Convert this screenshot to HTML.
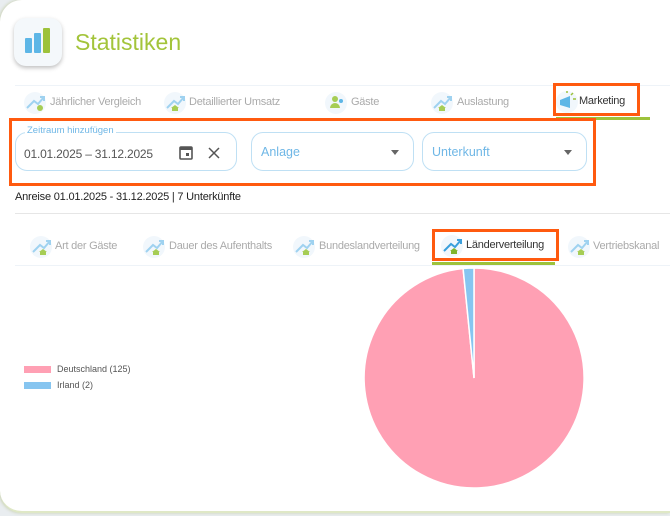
<!DOCTYPE html>
<html><head><meta charset="utf-8"><style>
body{margin:0;width:670px;height:516px;overflow:hidden;background:#e9edf0;font-family:"Liberation Sans",sans-serif;position:relative}
.card{position:absolute;left:0;top:0;width:670px;height:511px;background:#fff;border-radius:22px 0 0 22px;box-shadow:-1px 0 3px #c8d0b0;border-bottom:2px solid #dfe8c6}
.a{position:absolute}
.tab{position:absolute;font-size:11px;letter-spacing:-0.25px;color:#aaa;white-space:nowrap}
.ic{position:absolute;width:22px;height:22px;border-radius:50%;background:#f1f7fc}
.field{position:absolute;border:1px solid #bfe0f4;border-radius:12px;height:39px;top:132px;box-sizing:border-box}
.ph{position:absolute;left:9px;top:12px;font-size:12.5px;color:#6fb7e6}
.arr{position:absolute;right:14px;top:17px;width:0;height:0;border-left:4px solid transparent;border-right:4px solid transparent;border-top:5px solid #666}
.ob{position:absolute;border:3px solid #ff5a0f;box-sizing:border-box}
</style></head><body>
<div class="card">
<div class="a" style="left:14px;top:18px;width:48px;height:48px;border-radius:12px;background:#f4f8fb;box-shadow:0 2px 4px rgba(0,0,0,.25)">
 <div class="a" style="left:11px;top:20px;width:7px;height:15px;background:#5db6e6;border-radius:1px"></div>
 <div class="a" style="left:20px;top:15px;width:7px;height:20px;background:#5db6e6;border-radius:1px"></div>
 <div class="a" style="left:29px;top:10px;width:7px;height:25px;background:#9dc23b;border-radius:1px"></div>
</div>
<div class="a" style="left:75px;top:29px;font-size:23px;color:#a3c43a">Statistiken</div>
<div class="a" style="left:15px;top:85px;width:655px;height:1px;background:#eef3f8"></div>

<div class="ic" style="left:24px;top:92px"></div><div class="tab" style="left:50px;top:96px">Jährlicher Vergleich</div>
<div class="ic" style="left:164px;top:92px"></div><div class="tab" style="left:189px;top:96px">Detaillierter Umsatz</div>
<div class="ic" style="left:325px;top:92px"></div><div class="tab" style="left:351px;top:96px">Gäste</div>
<div class="ic" style="left:431px;top:92px"></div><div class="tab" style="left:457px;top:96px">Auslastung</div>
<div class="ic" style="left:556px;top:91px"></div><div class="tab" style="left:579px;top:95px;color:#333">Marketing</div>
<svg class="a" style="left:0;top:0" width="670" height="120">
<g fill="none" stroke="#9fd2f0" stroke-width="2"><path d="M27 108l7-7 4 3 6-7M40 97h4v4"/><path d="M167 108l7-7 4 3 6-7M180 97h4v4"/><path d="M434 108l7-7 4 3 6-7M447 97h4v4"/></g>
<g fill="#a6cd55"><circle cx="40" cy="108" r="3"/><path d="M175 105l4 3h-1v3h-6v-3h-1z"/><path d="M442 105l4 3h-1v3h-6v-3h-1z"/><circle cx="335" cy="99" r="3"/><path d="M330 108a5 5 0 0 1 10 0z"/></g>
<circle cx="341" cy="101" r="2" fill="#5db6e6"/>
<path d="M560 100l10-4v12l-10-3z" fill="#5db6e6"/><path d="M571 95l2-2M573 99h3M567 93l0-2" stroke="#9dc23b" stroke-width="1.5"/>
<rect x="556" y="117" width="94" height="3" fill="#9dc23b"/>
</svg>
<div class="ob" style="left:553px;top:83px;width:87px;height:33px"></div>

<div class="field" style="left:15px;width:222px;">
 <div class="a" style="left:9px;top:-8px;background:#fff;padding:0 2px;font-size:9.5px;color:#6fb7e6">Zeitraum hinzufügen</div>
 <div class="a" style="left:8px;top:14px;font-size:12px;letter-spacing:-0.2px;color:#555">01.01.2025 – 31.12.2025</div>
 <svg class="a" style="left:162px;top:12px" width="50" height="16"><rect x="2" y="2" width="12" height="12" rx="1" fill="none" stroke="#555" stroke-width="1.6"/><rect x="2" y="2" width="12" height="3" fill="#555"/><rect x="8" y="8" width="3" height="3" fill="#555"/><path d="M31 3l10 10M41 3l-10 10" stroke="#555" stroke-width="1.5"/></svg>
</div>
<div class="field" style="left:251px;width:163px"><div class="ph">Anlage</div><div class="arr"></div></div>
<div class="field" style="left:422px;width:165px"><div class="ph">Unterkunft</div><div class="arr"></div></div>
<div class="ob" style="left:9px;top:118px;width:587px;height:68px"></div>

<div class="a" style="left:15px;top:191px;font-size:11px;letter-spacing:-0.2px;color:#222">Anreise 01.01.2025 - 31.12.2025 | 7 Unterkünfte</div>
<div class="a" style="left:15px;top:213px;width:655px;height:1px;background:#e6e6e6"></div>

<div class="ic" style="left:30px;top:236px"></div><div class="tab" style="left:55px;top:240px">Art der Gäste</div>
<div class="ic" style="left:143px;top:236px"></div><div class="tab" style="left:169px;top:240px">Dauer des Aufenthalts</div>
<div class="ic" style="left:293px;top:236px"></div><div class="tab" style="left:319px;top:240px">Bundeslandverteilung</div>
<div class="ic" style="left:441px;top:235px"></div><div class="tab" style="left:466px;top:239px;color:#333">Länderverteilung</div>
<div class="ic" style="left:568px;top:236px"></div><div class="tab" style="left:593px;top:240px">Vertriebskanal</div>
<svg class="a" style="left:0;top:225px" width="670" height="50">
<g fill="none" stroke="#9fd2f0" stroke-width="2"><path d="M33 27l7-7 4 3 6-7M46 16h4v4"/><path d="M146 27l7-7 4 3 6-7M159 16h4v4"/><path d="M296 27l7-7 4 3 6-7M309 16h4v4"/><path d="M571 27l7-7 4 3 6-7M584 16h4v4"/></g>
<path d="M444 26l7-7 4 3 6-7M457 15h4v4" fill="none" stroke="#3a9fdc" stroke-width="2"/>
<g fill="#a6cd55"><path d="M43 24l4 3h-1v3h-6v-3h-1z"/><path d="M156 24l4 3h-1v3h-6v-3h-1z"/><path d="M306 24l4 3h-1v3h-6v-3h-1z"/><path d="M581 24l4 3h-1v3h-6v-3h-1z"/><path d="M454 23l4 3h-1v3h-6v-3h-1z" fill="#7fb52c"/></g>
<rect x="432" y="37" width="123" height="3" fill="#9dc23b"/>
<rect x="15" y="40" width="655" height="1" fill="#eef3f8"/>
</svg>
<div class="ob" style="left:432px;top:229px;width:127px;height:32px"></div>

<div class="a" style="left:24px;top:366px;width:27px;height:7px;background:#ffa0b4"></div>
<div class="a" style="left:57px;top:364px;font-size:9px;color:#555">Deutschland (125)</div>
<div class="a" style="left:24px;top:382px;width:27px;height:7px;background:#86c5f0"></div>
<div class="a" style="left:57px;top:380px;font-size:9px;color:#555">Irland (2)</div>

<svg class="a" style="left:364px;top:268px" width="222" height="222">
<path d="M110 110 L110 0 A110 110 0 1 1 99.1 0.55 Z" fill="#ffa0b4" stroke="#fff" stroke-width="1.5"/>
<path d="M110 110 L99.1 0.55 A110 110 0 0 1 110 0 Z" fill="#86c5f0" stroke="#fff" stroke-width="1.5"/>
</svg>
</div>
</body></html>
